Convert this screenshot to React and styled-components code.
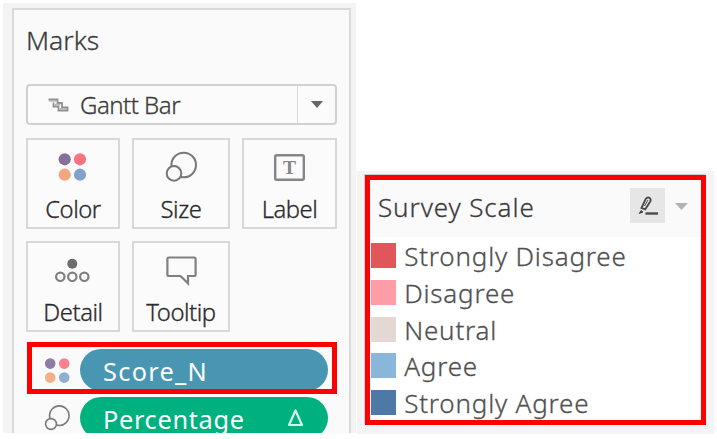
import React from 'react';
import styled, { createGlobalStyle } from 'styled-components';

const Global = createGlobalStyle`
  * { box-sizing: border-box; }
  body {
    margin: 0;
    background: #fff;
    color: #3c3c3c;
    font-family: "Noto Sans", Roboto, sans-serif;
    -webkit-text-stroke: 0.3px currentColor;
  }
  svg { display: block; flex: none; }
`;

const Page = styled.main`
  display: flex;
  align-items: flex-start;
  gap: 1px;
  width: 717px;
  height: 439px;
  padding: 3px 0 0 3px;
  overflow: hidden;
`;

const Shelf = styled.section`
  width: 353px;
  height: 430px;
  padding: 5px 5px 0 9px;
  background: #f4f4f4;
  overflow: hidden;
`;

const MarksCard = styled.div`
  height: 425px;
  padding: 0 12px;
  border: 2px solid #dadada;
  border-bottom: 0;
  background: #fafafa;
`;

const CardTitle = styled.h2`
  margin: 0 0 13px;
  font-size: 26.5px;
  font-weight: 300;
  line-height: 61px;
`;

const MarkSelect = styled.div`
  display: flex;
  align-items: center;
  height: 41px;
  margin-bottom: 13px;
  padding-left: 20px;
  border: 2px solid #d0d0d0;
  border-radius: 4px;
  background: #fbfbfb;
`;

const SelectLabel = styled.span`
  flex: 1;
  padding-left: 11px;
  font-size: 24px;
  font-weight: 300;
  letter-spacing: -0.5px;
  line-height: 37px;
`;

const SelectArrow = styled.span`
  display: flex;
  align-items: center;
  justify-content: center;
  width: 38px;
  height: 37px;
  border-left: 1px solid #dadada;
`;

const ButtonGrid = styled.div`
  display: grid;
  grid-template-columns: 94px 98px 95px;
  grid-auto-rows: 91px;
  gap: 12px;
`;

const MarkButton = styled.div`
  display: flex;
  flex-direction: column;
  border: 2px solid #d8d8d8;
  background: #fbfbfb;
`;

const ButtonLabel = styled.span`
  font-size: 23.8px;
  font-weight: 300;
  letter-spacing: -0.45px;
  line-height: 26px;
  text-align: center;
  color: #2b2b2b;
`;

const PillRow = styled.div`
  display: flex;
  align-items: flex-start;
  width: 310px;
  height: ${p => (p.$marked ? 52 : 42)}px;
  margin: ${p => (p.$marked ? '10px 0 0 1px' : '0 0 0 1px')};
  padding: ${p => (p.$marked ? '2px 4px 0 12px' : '3px 9px 0 17px')};
  border: ${p => (p.$marked ? '5px solid #f00' : '0')};
  overflow: hidden;
`;

const Pill = styled.div`
  display: flex;
  flex: none;
  justify-content: space-between;
  width: 248px;
  height: 42px;
  margin-left: 9px;
  padding: 3px 24px 0 23px;
  border-radius: 21px;
  background: ${p => p.$color};
  color: #fff;
  font-size: 25.3px;
  font-weight: 400;
  -webkit-text-stroke: 0;
  letter-spacing: ${p => p.$spacing}px;
  line-height: 38px;
`;

const LegendShelf = styled.section`
  width: 357px;
  height: 263px;
  margin-top: 168px;
  padding: 4px 8px 0;
  background: #f4f4f4;
`;

const Legend = styled.div`
  height: 250px;
  border: 5px solid #f00;
  background: #fff;
  box-shadow: -1px -1px 0 #c9cfcf;
`;

const LegendHeader = styled.header`
  display: flex;
  height: 57px;
  padding: 0 13px 0 8px;
  background: #fafafa;
`;

const LegendTitle = styled.h2`
  flex: 1;
  margin: 0;
  font-size: 26px;
  font-weight: 300;
  letter-spacing: 0.9px;
  line-height: 54px;
`;

const EditButton = styled.span`
  width: 35px;
  height: 35px;
  margin: 8px 10px 0 0;
  background: #e6e6e6;
`;

const HeaderArrow = styled.span`
  margin-top: 23px;
`;

const LegendList = styled.ul`
  display: flex;
  flex-direction: column;
  gap: 11.75px;
  margin: 0;
  padding: 6px 0 0 1px;
  list-style: none;
`;

const LegendItem = styled.li`
  display: flex;
  gap: 8.2px;
  height: 25px;
`;

const Swatch = styled.span`
  width: 25px;
  background: ${p => p.$color};
`;

const ItemLabel = styled.span`
  font-size: 26px;
  font-weight: 300;
  letter-spacing: 0.8px;
  line-height: 26.5px;
  color: #505050;
  white-space: nowrap;
`;

const GanttIcon = () => (
  <svg width="21" height="14" fill="none" stroke="#8f8f8f" strokeWidth="1.8">
    <path d="M0.5 1.5H9.5V5H14V9.5H19.5V12.5H10.5V8.5H5.5V4.5" />
    <path d="M1 3H8M7 6.5H12.500M12 10.800H18" stroke="#b5b5b5" strokeWidth="1.5" />
  </svg>
);

const Triangle = ({ width, height, color }) => (
  <svg width={width} height={height} viewBox="0 0 12 7" preserveAspectRatio="none">
    <path d="M0 0h12L6 7z" fill={color} />
  </svg>
);

const ColorIcon = () => (
  <svg width="90" height="56">
    <circle cx="36.7" cy="19.3" r="6.1" fill="#86709a" />
    <circle cx="52" cy="19.3" r="6.1" fill="#f97383" />
    <circle cx="36.7" cy="34.7" r="6.1" fill="#f2a77e" />
    <circle cx="52" cy="34.7" r="6.1" fill="#81a3cb" />
  </svg>
);

const SizeIcon = () => (
  <svg width="94" height="56" stroke="#777" strokeWidth="2">
    <circle cx="49.7" cy="25" r="12.3" fill="none" />
    <circle cx="40" cy="33.4" r="7.3" fill="#fbfbfb" />
  </svg>
);

const LabelIcon = () => (
  <svg width="91" height="56">
    <rect x="31.2" y="15.2" width="28.6" height="24.6" rx="1.5" fill="none" stroke="#868686" strokeWidth="2.4" />
    <text x="45.5" y="34.4" textAnchor="middle" fontFamily='"Liberation Serif", serif' fontSize="19.5" fontWeight="700" fill="#868686">T</text>
  </svg>
);

const DetailIcon = () => (
  <svg width="90" height="56" fill="none" stroke="#808080" strokeWidth="2.2">
    <circle cx="44.3" cy="20.7" r="5" fill="#6c6c6c" stroke="none" />
    <circle cx="32.3" cy="33.8" r="4.2" />
    <circle cx="44.3" cy="33.8" r="4.2" />
    <circle cx="56.3" cy="33.8" r="4.2" />
  </svg>
);

const TooltipIcon = () => (
  <svg width="94" height="56" fill="none" stroke="#808080" strokeWidth="2.2">
    <path d="M35 14.5h25q1.6 0 1.6 1.6v15.3q0 1.6-1.6 1.6h-6v7.4L46.5 33H35q-1.6 0-1.6-1.6V16.1q0-1.6 1.6-1.6z" />
  </svg>
);

const PillColorIcon = () => (
  <svg width="27" height="40">
    <circle cx="6.2" cy="14.6" r="5.3" fill="#8f7ba3" />
    <circle cx="20.2" cy="14.6" r="5.3" fill="#f98190" />
    <circle cx="6.2" cy="28.6" r="5.3" fill="#f4b088" />
    <circle cx="20.2" cy="28.6" r="5.3" fill="#91add1" />
  </svg>
);

const PillSizeIcon = () => (
  <svg width="27" height="36" stroke="#7b7b7b" strokeWidth="1.6">
    <circle cx="15.3" cy="18.7" r="9.8" fill="none" />
    <circle cx="7" cy="27" r="5.4" fill="#fafafa" />
  </svg>
);

const DeltaIcon = () => (
  <svg width="17" height="36">
    <path d="M8.5 10.5L2 25H15z" fill="none" stroke="#d9f5ea" strokeWidth="2.2" strokeLinejoin="round" />
  </svg>
);

const EditIcon = () => (
  <svg width="35" height="35" fill="none" stroke="#4a4a4a" strokeWidth="1.8">
    <path d="M11.5 20L15.8 10.8Q17.5 8.7 19.6 9.9Q21.3 11.5 20.3 13.5L15.2 21.3z" />
    <path d="M14.5 18l3.5-6" strokeWidth="1" />
    <path d="M9.3 25.5l1.7-3 2 1.5z" fill="#4a4a4a" strokeWidth="1" />
    <path d="M15.5 25.5H28" strokeWidth="2.4" />
  </svg>
);

const buttons = [
  ['Color', ColorIcon],
  ['Size', SizeIcon],
  ['Label', LabelIcon],
  ['Detail', DetailIcon],
  ['Tooltip', TooltipIcon],
];

const scale = [
  ['Strongly Disagree', '#e15759'],
  ['Disagree', '#ff9da7'],
  ['Neutral', '#e3d8d3'],
  ['Agree', '#8ab6da'],
  ['Strongly Agree', '#4e79a7'],
];

export default function App() {
  return (
    <>
      <Global />
      <Page>
        <Shelf>
          <MarksCard>
            <CardTitle>Marks</CardTitle>
            <MarkSelect>
              <GanttIcon />
              <SelectLabel>Gantt Bar</SelectLabel>
              <SelectArrow><Triangle width={12} height={7} color="#666" /></SelectArrow>
            </MarkSelect>
            <ButtonGrid>
              {buttons.map(([name, Icon]) => (
                <MarkButton key={name}>
                  <Icon />
                  <ButtonLabel>{name}</ButtonLabel>
                </MarkButton>
              ))}
            </ButtonGrid>
            <PillRow $marked>
              <PillColorIcon />
              <Pill $color="#4996b2" $spacing={1.3}>Score_N</Pill>
            </PillRow>
            <PillRow>
              <PillSizeIcon />
              <Pill $color="#00b180" $spacing={0.7}>Percentage<DeltaIcon /></Pill>
            </PillRow>
          </MarksCard>
        </Shelf>
        <LegendShelf>
          <Legend>
            <LegendHeader>
              <LegendTitle>Survey Scale</LegendTitle>
              <EditButton><EditIcon /></EditButton>
              <HeaderArrow><Triangle width={13} height={7} color="#b3b3b3" /></HeaderArrow>
            </LegendHeader>
            <LegendList>
              {scale.map(([name, color]) => (
                <LegendItem key={name}>
                  <Swatch $color={color} />
                  <ItemLabel>{name}</ItemLabel>
                </LegendItem>
              ))}
            </LegendList>
          </Legend>
        </LegendShelf>
      </Page>
    </>
  );
}
